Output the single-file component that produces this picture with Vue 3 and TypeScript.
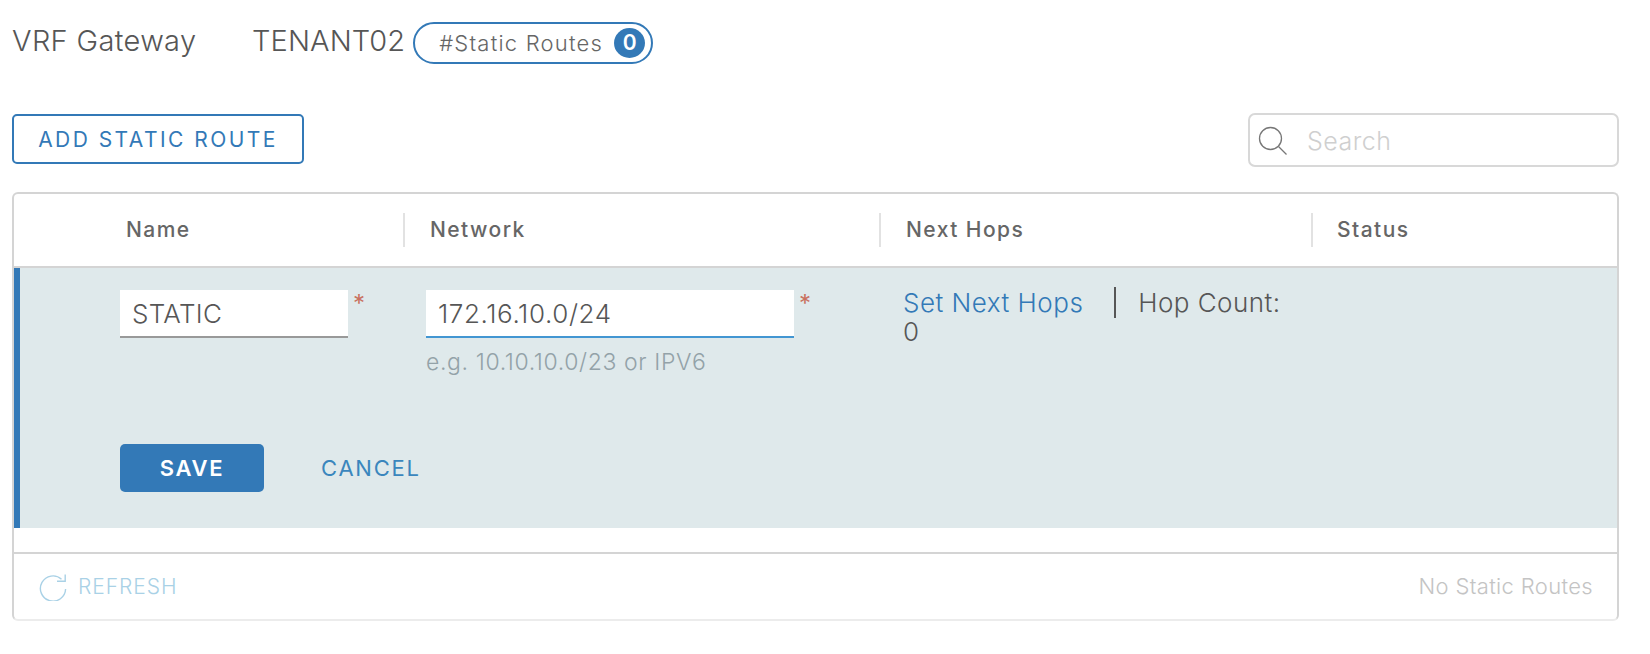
<template>
  <div class="page">
    <div class="title-row">
      <span class="title">VRF Gateway</span>
      <span class="tenant">TENANT02</span>
      <span class="pill">
        <span class="pill-label">#Static Routes</span>
        <span class="pill-count">{{ routes.length }}</span>
      </span>
    </div>

    <div class="toolbar">
      <button class="add-btn" type="button">ADD STATIC ROUTE</button>
      <div class="search">
        <svg class="search-icon" viewBox="0 0 32 32" width="32" height="32" fill="none" stroke="#777" stroke-width="1.3">
          <circle cx="13.5" cy="13.5" r="11" />
          <path d="M21.5 21.5l8 8" />
        </svg>
        <input class="search-input" type="text" placeholder="Search" />
      </div>
    </div>

    <div class="grid">
      <div class="head">
        <div v-for="col in columns" :key="col" class="head-cell">{{ col }}</div>
      </div>

      <div class="edit-row">
        <div class="fields">
          <div class="field name-field">
            <input v-model="name" class="text-input" type="text" />
            <span class="req">*</span>
          </div>
          <div class="field network-field">
            <div class="network-wrap">
              <input v-model="network" class="text-input focused" type="text" />
              <div class="hint">e.g. 10.10.10.0/23 or IPV6</div>
            </div>
            <span class="req">*</span>
          </div>
          <div class="hops">
            <a class="hops-link">Set Next Hops</a><span class="hops-count">Hop Count:</span> <span>0</span>
          </div>
        </div>
        <div class="actions">
          <button class="save-btn" type="button">SAVE</button>
          <button class="cancel-btn" type="button">CANCEL</button>
        </div>
      </div>

      <div class="spacer"></div>

      <div class="foot">
        <span class="refresh">
          <svg viewBox="0 0 28 28" width="28" height="28" fill="none" stroke="#a9d1e6" stroke-width="1.4">
            <path d="M22.5 6.2A12.6 12.6 0 1 0 26.6 16" />
            <path d="M18 8.2h8.2V1.5" />
          </svg>
          REFRESH
        </span>
        <span class="empty">No Static Routes</span>
      </div>
    </div>
  </div>
</template>

<script setup lang="ts">
import { ref } from 'vue';

const columns = ['Name', 'Network', 'Next Hops', 'Status'];
const routes = ref<string[]>([]);
const name = ref('STATIC');
const network = ref('172.16.10.0/24');
</script>

<style>
body {
  background: #fff;
}
</style>

<style scoped>
.page {
  width: 1650px;
  height: 654px;
  padding: 22px 31px 0 12px;
  box-sizing: border-box;
  font-family: Inter, "Liberation Sans", sans-serif;
  color: #565656;
  overflow: hidden;
}

.title-row {
  display: flex;
  align-items: center;
  height: 42px;
}

.title,
.tenant {
  position: relative;
  top: -3px;
  font-size: 29px;
  font-weight: 300;
  letter-spacing: 0.1px;
}

.title {
  width: 240px;
  letter-spacing: 0.35px;
}

.pill {
  display: flex;
  align-items: center;
  justify-content: space-between;
  box-sizing: border-box;
  width: 240px;
  height: 42px;
  margin-left: 8px;
  padding: 0 6px 0 24px;
  border: 2px solid #3379b7;
  border-radius: 21px;
  font-size: 22px;
  font-weight: 300;
  letter-spacing: 1.2px;
  color: #666;
}

.pill-count {
  width: 31px;
  height: 30px;
  border-radius: 50%;
  background: #3379b7;
  color: #fff;
  font-size: 21px;
  font-weight: 600;
  letter-spacing: 0;
  line-height: 30px;
  text-align: center;
}

.toolbar {
  display: flex;
  align-items: flex-start;
  justify-content: space-between;
  margin-top: 49px;
}

.add-btn {
  width: 292px;
  height: 50px;
  margin-top: 1px;
  padding: 0;
  border: 2px solid #3379b7;
  border-radius: 5px;
  background: #fff;
  color: #3379b7;
  font: 400 21px Inter, sans-serif;
  letter-spacing: 2.45px;
}

.search {
  display: flex;
  align-items: center;
  box-sizing: border-box;
  width: 371px;
  height: 54px;
  padding: 1px 0 0 7px;
  border: 2px solid #d8d8d8;
  border-radius: 7px;
}

.search-input {
  width: 300px;
  margin-left: 18px;
  border: 0;
  outline: 0;
  padding: 0;
  font: 300 25px Inter, sans-serif;
  letter-spacing: 0.5px;
}

.search-input::placeholder {
  color: #cfcfcf;
}

.grid {
  height: 429px;
  margin-top: 25px;
  box-sizing: border-box;
  border: 2px solid #d4d4d4;
  border-bottom-color: #ececec;
  border-radius: 6px;
  display: flex;
  flex-direction: column;
}

.head {
  display: grid;
  grid-template-columns: 391px 476px 432px 1fr;
  height: 74px;
  box-sizing: border-box;
  padding-top: 19px;
  border-bottom: 2px solid #d4d4d4;
}

.head-cell {
  height: 34px;
  padding-left: 25px;
  border-right: 2px solid #e2e2e2;
  color: #666;
  font-size: 21px;
  font-weight: 500;
  letter-spacing: 1.45px;
  line-height: 34px;
}

.head-cell:first-child {
  padding-left: 112px;
}

.head-cell:last-child {
  padding-left: 24px;
  border-right: 0;
}

.edit-row {
  height: 260px;
  box-sizing: border-box;
  padding: 22px 0 0 100px;
  border-left: 6px solid #3379b7;
  background: #dfe9eb;
}

.fields {
  display: flex;
  height: 154px;
}

.field {
  display: flex;
  align-items: flex-start;
}

.name-field {
  width: 306px;
}

.network-field {
  width: 477px;
}

.text-input {
  display: block;
  box-sizing: border-box;
  height: 48px;
  padding: 0 12px;
  border: 0;
  border-bottom: 2px solid #999;
  outline: 0;
  background: #fff;
  color: #565656;
  font: 300 26px Inter, sans-serif;
  letter-spacing: 0.3px;
}

.name-field .text-input {
  width: 228px;
}

.network-wrap .text-input {
  width: 368px;
  letter-spacing: 0.6px;
}

.text-input.focused {
  border-bottom-color: #4296d2;
}

.hint {
  margin-top: 10px;
  color: #93a2a8;
  font-size: 23px;
  font-weight: 300;
  letter-spacing: 0.62px;
  white-space: nowrap;
}

.req {
  margin-left: 5px;
  color: #c9715f;
  font-size: 24px;
  line-height: 28px;
}

.hops {
  width: 390px;
  font-size: 26px;
  font-weight: 300;
  line-height: 29px;
  margin-top: -2px;
}

.hops-link {
  color: #3379b7;
  padding-right: 31px;
  border-right: 2px solid #565656;
  margin-right: 22px;
  letter-spacing: 0.5px;
}

.hops-count {
  letter-spacing: 0.45px;
}

.actions {
  display: flex;
  align-items: center;
  gap: 57px;
}

.save-btn {
  width: 144px;
  height: 48px;
  padding: 0;
  border: 0;
  border-radius: 5px;
  background: #3379b7;
  color: #fff;
  font: 600 22px Inter, sans-serif;
  letter-spacing: 1.7px;
}

.cancel-btn {
  padding: 0;
  border: 0;
  background: none;
  color: #3a86bd;
  font: 400 22px Inter, sans-serif;
  letter-spacing: 1.75px;
}

.spacer {
  height: 24px;
  border-bottom: 2px solid #d4d4d4;
}

.foot {
  flex: 1;
  display: flex;
  align-items: center;
  justify-content: space-between;
  padding: 0 24px 0 25px;
}

.refresh {
  display: flex;
  align-items: center;
  gap: 11px;
  color: #a9d1e6;
  font-size: 21px;
  font-weight: 300;
  letter-spacing: 0.95px;
}

.empty {
  position: relative;
  top: -1px;
  color: #c4c4c4;
  font-size: 22px;
  font-weight: 300;
  letter-spacing: 0.35px;
}
</style>
